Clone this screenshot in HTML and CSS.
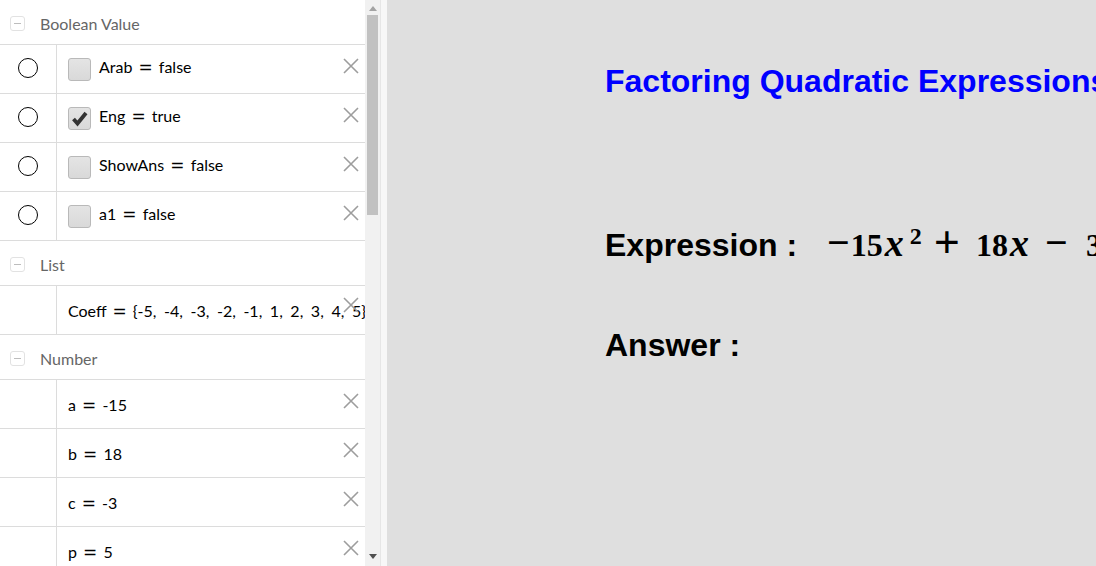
FILE: index.html
```html
<!DOCTYPE html>
<html lang="en">
<head>
    <meta charset="UTF-8">
    <meta name="viewport" content="width=device-width, initial-scale=1.0">
    <title>Factoring Quadratic Expressions</title>
    <link rel="stylesheet" href="styles.css">
</head>
<body>
    <div class="app">
        <!-- Algebra view -->
        <div class="algebra">
            <div class="list">
                <div class="group-head"><span class="toggle"></span>Boolean Value</div>

                <div class="item bool">
                    <div class="marble"><span class="radio"></span></div>
                    <div class="def"><span class="check"></span><span class="txt">Arab <span class="eq">=</span> false</span></div>
                    <svg class="del" viewBox="0 0 16 16"><path d="M1 1L15 15M15 1L1 15"/></svg>
                </div>
                <div class="item bool">
                    <div class="marble"><span class="radio"></span></div>
                    <div class="def">
                        <span class="check"><svg viewBox="0 0 21 21"><path d="M4.5 11L8.5 15.5L17 5" /></svg></span><span class="txt">Eng <span class="eq">=</span> true</span>
                    </div>
                    <svg class="del" viewBox="0 0 16 16"><path d="M1 1L15 15M15 1L1 15"/></svg>
                </div>
                <div class="item bool">
                    <div class="marble"><span class="radio"></span></div>
                    <div class="def"><span class="check"></span><span class="txt">ShowAns <span class="eq">=</span> false</span></div>
                    <svg class="del" viewBox="0 0 16 16"><path d="M1 1L15 15M15 1L1 15"/></svg>
                </div>
                <div class="item bool">
                    <div class="marble"><span class="radio"></span></div>
                    <div class="def"><span class="check"></span><span class="txt">a1 <span class="eq">=</span> false</span></div>
                    <svg class="del" viewBox="0 0 16 16"><path d="M1 1L15 15M15 1L1 15"/></svg>
                </div>

                <div class="group-head"><span class="toggle"></span>List</div>
                <div class="item">
                    <div class="marble"></div>
                    <div class="def"><span class="txt">Coeff <span class="eq">=</span> <span class="list-val">{-5, -4, -3, -2, -1, 1, 2, 3, 4, 5}</span></span></div>
                    <svg class="del up" viewBox="0 0 16 16"><path d="M1 1L15 15M15 1L1 15"/></svg>
                </div>

                <div class="group-head"><span class="toggle"></span>Number</div>
                <div class="item">
                    <div class="marble"></div>
                    <div class="def"><span class="txt">a <span class="eq">=</span> -15</span></div>
                    <svg class="del" viewBox="0 0 16 16"><path d="M1 1L15 15M15 1L1 15"/></svg>
                </div>
                <div class="item">
                    <div class="marble"></div>
                    <div class="def"><span class="txt">b <span class="eq">=</span> 18</span></div>
                    <svg class="del" viewBox="0 0 16 16"><path d="M1 1L15 15M15 1L1 15"/></svg>
                </div>
                <div class="item">
                    <div class="marble"></div>
                    <div class="def"><span class="txt">c <span class="eq">=</span> -3</span></div>
                    <svg class="del" viewBox="0 0 16 16"><path d="M1 1L15 15M15 1L1 15"/></svg>
                </div>
                <div class="item">
                    <div class="marble"></div>
                    <div class="def"><span class="txt">p <span class="eq">=</span> 5</span></div>
                    <svg class="del" viewBox="0 0 16 16"><path d="M1 1L15 15M15 1L1 15"/></svg>
                </div>
            </div>

            <!-- Scrollbar -->
            <div class="scrollbar">
                <span class="arrow arrow-up"></span>
                <div class="thumb"></div>
                <span class="arrow arrow-down"></span>
            </div>
        </div>

        <div class="splitter"></div>

        <!-- Graphics view -->
        <div class="graphics">
            <div class="title">Factoring Quadratic Expressions</div>
            <div class="line expr-line">
                <span class="label">Expression :</span>
                <span class="math"><span class="op lead">−</span><span class="num">15</span><i class="var">x</i><sup>2</sup><span class="op plus">+</span><span class="num gap">18</span><i class="var">x</i><span class="op minus">−</span><span class="num last">3</span></span>
            </div>
            <div class="line answer-line">
                <span class="label">Answer :</span>
            </div>
        </div>
    </div>
</body>
</html>
```

FILE: styles.css
```css
body {
    margin: 0;
    padding: 0;
    overflow: hidden;
    font-family: Lato, "Noto Sans", sans-serif;
}

.app {
    display: flex;
    width: 1096px;
    height: 566px;
    overflow: hidden;
}

/* Algebra view on the left */
.algebra {
    display: flex;
    width: 380px;
    flex-shrink: 0;
    background-color: #ffffff;
}

.list {
    width: 365px;
    overflow: hidden;
}

.group-head {
    display: flex;
    align-items: center;
    box-sizing: border-box;
    height: 45px;
    padding-top: 2px;
    border-bottom: 1px solid #dcdcdc;
    color: #666666;
    font-size: 16px;
}

/* Small collapse box in front of each group */
.toggle {
    position: relative;
    box-sizing: border-box;
    width: 15px;
    height: 15px;
    margin: 1px 15px 0 10px;
    border: 1px solid #e2e2e2;
    border-radius: 3px;
}

.toggle::after {
    content: "";
    position: absolute;
    left: 3px;
    top: 6px;
    width: 7px;
    height: 1px;
    background-color: #bdbdbd;
}

.item {
    position: relative;
    display: flex;
    height: 48px;
    border-bottom: 1px solid #dcdcdc;
}

.marble {
    display: flex;
    align-items: center;
    justify-content: center;
    width: 56px;
    flex-shrink: 0;
    border-right: 1px solid #dcdcdc;
}

.bool .marble {
    padding-bottom: 2px;
}

.radio {
    box-sizing: border-box;
    width: 20px;
    height: 20px;
    border: 1px solid #000000;
    border-radius: 50%;
}

.def {
    display: flex;
    align-items: center;
    padding-left: 11px;
    padding-top: 1px;
    font-size: 16px;
    color: #000000;
    white-space: nowrap;
}

.bool .txt {
    margin-bottom: 6px;
}

/* wide math style equals sign */
.eq {
    margin: 0 2px;
    font-family: "DejaVu Sans", sans-serif;
    font-size: 17px;
}

.list-val {
    word-spacing: 3.5px;
}

.check {
    box-sizing: border-box;
    width: 23px;
    height: 23px;
    margin-right: 8px;
    border: 1px solid #b9b9b9;
    border-radius: 3px;
    background: linear-gradient(#e4e4e4, #d9d9d9);
}

.check svg {
    display: block;
    width: 21px;
    height: 21px;
}

.check path {
    fill: none;
    stroke: #333333;
    stroke-width: 3.8;
    stroke-linecap: butt;
    stroke-linejoin: miter;
}

/* delete cross, sits over the row content */
.del {
    position: absolute;
    top: 13px;
    right: 6px;
    width: 16px;
    height: 16px;
}

.del.up {
    top: 11px;
}

.del path {
    stroke: #9d9d9d;
    stroke-width: 1.6;
    fill: none;
}

/* Scrollbar */
.scrollbar {
    display: flex;
    flex-direction: column;
    align-items: center;
    width: 15px;
    background-color: #f1f1f1;
}

.thumb {
    width: 11px;
    height: 200px;
    margin-top: 4px;
    background-color: #c1c1c1;
}

.arrow {
    width: 0;
    height: 0;
    border-left: 4px solid transparent;
    border-right: 4px solid transparent;
}

.arrow-up {
    margin-top: 6px;
    border-bottom: 5px solid #a3a3a3;
}

.arrow-down {
    margin-top: auto;
    margin-bottom: 7px;
    border-top: 5px solid #505050;
}

.splitter {
    width: 6px;
    flex-shrink: 0;
    border-left: 1px solid #e6e6e6;
    background-color: #f7f7f7;
}

/* Graphics view */
.graphics {
    flex: 1;
    min-width: 0;
    padding-left: 218px;
    background-color: #dfdfdf;
    font-family: "Liberation Sans", Arial, sans-serif;
    font-weight: bold;
    white-space: nowrap;
    overflow: hidden;
}

.title {
    margin-top: 65px;
    font-size: 32px;
    line-height: 32px;
    color: #0000ff;
}

.line {
    display: flex;
    align-items: baseline;
    font-size: 32px;
    line-height: 32px;
    color: #000000;
}

.expr-line {
    margin-top: 132px;
}

.answer-line {
    margin-top: 68px;
}

/* rendered formula */
.math {
    margin-left: 30px;
    font-family: "Liberation Serif", "Times New Roman", serif;
    font-size: 32px;
    font-weight: bold;
}

.math .op {
    font-size: 40px;
    line-height: 0;
}

.math .op.lead {
    margin-right: 1px;
}

.math .op.plus {
    margin-left: 12px;
    font-size: 46px;
    vertical-align: -2px;
}

.math .op.minus {
    margin-left: 16px;
}

.math .var {
    margin-left: 2px;
    font-size: 38px;
    line-height: 0;
}

.math sup {
    margin-left: 6px;
    font-size: 24px;
    line-height: 0;
    vertical-align: 12px;
}

.math .gap {
    margin-left: 16px;
}

.math .last {
    margin-left: 18px;
}
```
